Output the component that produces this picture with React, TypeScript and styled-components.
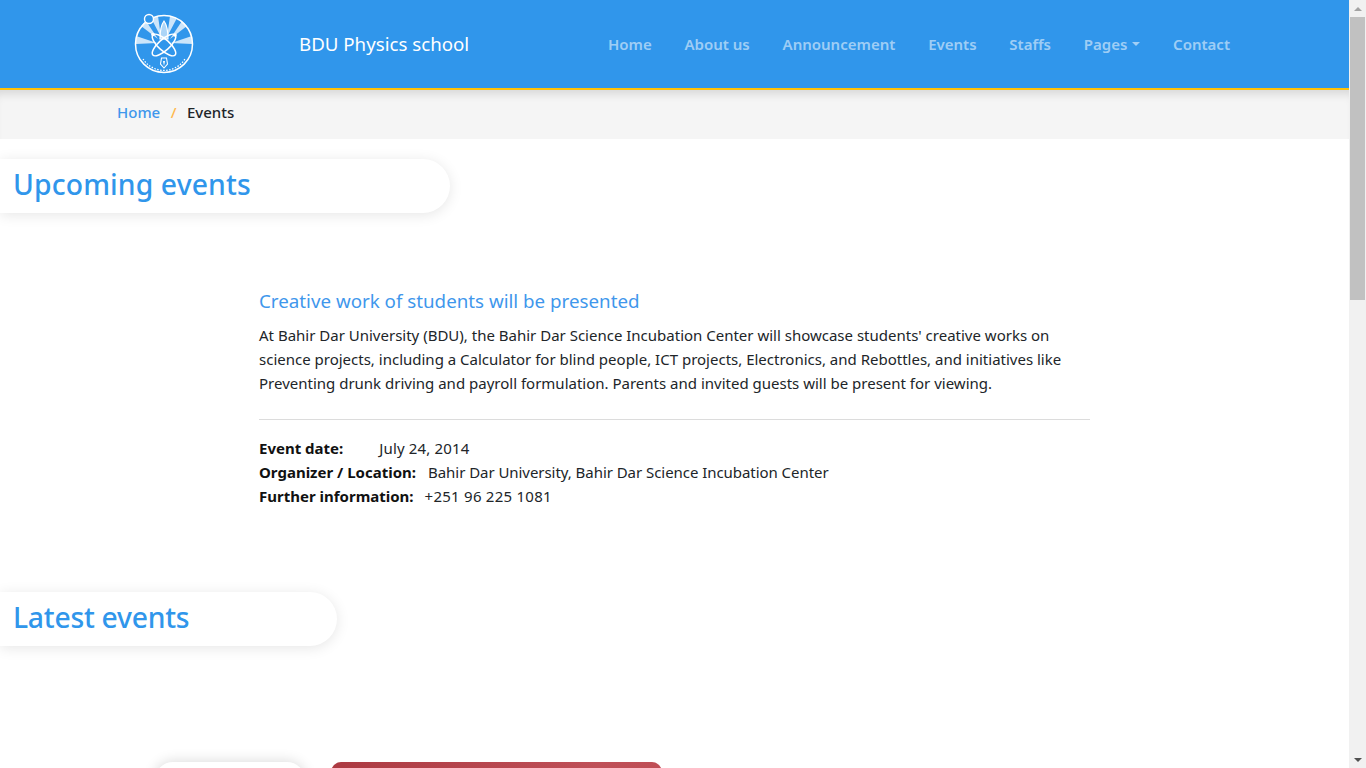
import React from 'react';
import styled, { createGlobalStyle } from 'styled-components';

const GlobalStyle = createGlobalStyle`
  body {
    margin: 0;
    background: #fff;
    color: #212529;
    font-family: "Noto Sans", "Open Sans", sans-serif;
    font-size: 15px;
    line-height: 24px;
  }
`;

const Page = styled.div`
  margin-right: 17px;
`;

const Scrollbar = styled.div`
  position: fixed;
  top: 0;
  right: 0;
  bottom: 0;
  display: flex;
  flex-direction: column;
  align-items: center;
  width: 17px;
  background: #f1f1f1;
`;

const ArrowBox = styled.div<{ $bottom?: boolean }>`
  display: flex;
  align-items: center;
  justify-content: center;
  height: 17px;
  margin-top: ${(p) => (p.$bottom ? 'auto' : '0')};
`;

const ArrowUp = styled.span`
  border-bottom: 4px solid #a3a3a3;
  border-left: 4px solid transparent;
  border-right: 4px solid transparent;
`;

const ArrowDown = styled.span`
  border-top: 4px solid #505050;
  border-left: 4px solid transparent;
  border-right: 4px solid transparent;
`;

const Thumb = styled.div`
  width: 15px;
  height: 283px;
  background: #c1c1c1;
`;

const Header = styled.header`
  display: flex;
  align-items: center;
  height: 88px;
  padding: 0 119px 0 133px;
  background: #3096eb;
  border-bottom: 2px solid #ffc107;
`;

const Brand = styled.a`
  margin-left: 104px;
  color: #fff;
  font-size: 18.7px;
  white-space: nowrap;
`;

const Nav = styled.nav`
  display: flex;
  gap: 32.8px;
  margin-left: auto;
`;

const NavLink = styled.a`
  display: flex;
  align-items: center;
  color: rgba(255, 255, 255, 0.55);
  font-size: 15px;
  font-weight: 600;
  white-space: nowrap;
`;

const Caret = styled.span`
  margin-left: 5px;
  border-top: 4px solid currentColor;
  border-left: 4px solid transparent;
  border-right: 4px solid transparent;
`;

const Breadcrumb = styled.div`
  display: flex;
  align-items: center;
  box-sizing: border-box;
  height: 49px;
  padding: 0 0 6px 117px;
  background: #f5f5f5;
  box-shadow: inset 0 10px 10px -6px rgba(0, 0, 0, 0.12);
  font-weight: 500;
`;

const Crumb = styled.a`
  color: #3f97ec;
`;

const CrumbSep = styled.span`
  margin: 0 10.5px;
  color: #ffb84d;
`;

const CrumbCurrent = styled.span`
  color: #212529;
`;

const SectionTitle = styled.h2<{ $width: number; $spacing: number }>`
  width: ${(p) => p.$width}px;
  box-sizing: border-box;
  height: 54px;
  margin: 20px 0 0;
  padding-left: 13px;
  background: #fff;
  border-radius: 0 27px 27px 0;
  box-shadow: 0 2px 14px rgba(0, 0, 0, 0.1);
  color: #3096eb;
  font-size: 28.3px;
  font-weight: 500;
  letter-spacing: ${(p) => p.$spacing}px;
  line-height: 50px;
`;

const EventBlock = styled.article`
  width: 831px;
  margin: 74px 0 0 259px;
`;

const EventTitle = styled.h3`
  margin: 0 0 8px;
  color: #3f97ec;
  font-size: 18.75px;
  font-weight: 400;
  line-height: 28px;
`;

const EventText = styled.p`
  margin: 0;
`;

const Rule = styled.hr`
  margin: 24px 0 16px;
  border: 0;
  border-top: 1px solid #dcdcdc;
`;

const DetailRow = styled.div`
  display: flex;
`;

const DetailLabel = styled.strong<{ $gap: number }>`
  margin-right: ${(p) => p.$gap}px;
  color: #111;
  font-weight: 700;
`;

const DetailValue = styled.span<{ $spacing?: number }>`
  letter-spacing: ${(p) => p.$spacing ?? 0}px;
`;

const LatestSection = styled.section`
  margin-top: 84px;
`;

const CardRow = styled.div`
  display: flex;
  align-items: flex-start;
  gap: 26px;
  margin: 116px 0 0 155px;
  padding-bottom: 90px;
`;

const ProfileCard = styled.div`
  width: 150px;
  height: 320px;
  background: #fff;
  border-radius: 18px;
  box-shadow: 0 0 14px rgba(0, 0, 0, 0.16);
`;

const PhotoCard = styled.div`
  width: 331px;
  height: 1140px;
  border-radius: 10px;
  background: linear-gradient(100deg, #ac3a42, #bf5058 50%, #c0474d);
`;

const Logo = () => (
  <svg width="62" height="62" viewBox="0 0 62 62" fill="none" stroke="#fff">
    <g fill="#fff" fillOpacity="0.75" stroke="none">
      <path d="M28 24 L18 5 L25 3 Z" />
      <path d="M34 24 L44 5 L37 3 Z" />
      <path d="M25 26 L8 13 L13 8 Z" />
      <path d="M37 26 L54 13 L49 8 Z" />
      <path d="M24 30 L3 23 L3 31 Z" />
      <path d="M38 30 L59 23 L59 31 Z" />
    </g>
    <circle cx="31" cy="31" r="28.5" strokeWidth="1.5" />
    <circle cx="16" cy="6" r="4.5" strokeWidth="1.4" fill="#3096eb" />
    <path d="M31 8 C34 12 35 17 35 26 L27 26 C27 17 28 12 31 8 Z" fill="#fff" fillOpacity="0.6" strokeWidth="1.2" />
    <g strokeWidth="1.5">
      <ellipse cx="31" cy="32" rx="15" ry="5.5" transform="rotate(42 31 32)" />
      <ellipse cx="31" cy="32" rx="15" ry="5.5" transform="rotate(-42 31 32)" />
    </g>
    <circle cx="20" cy="21.5" r="1.8" fill="#fff" stroke="none" />
    <circle cx="42" cy="22" r="1.8" fill="#fff" stroke="none" />
    <path d="M28.5 45 L33.5 45 L34.5 51 L31 55 L27.5 51 Z" strokeWidth="1.1" />
    <path d="M30 48 L32 48 L31 53 Z" fill="#fff" stroke="none" />
    <path d="M10 46 A 25 25 0 0 0 52 46" strokeWidth="1.3" strokeDasharray="1.5 1.5" />
  </svg>
);

export default function App() {
  return (
    <>
      <GlobalStyle />
      <Page>
        <Header>
          <Logo />
          <Brand>BDU Physics school</Brand>
          <Nav>
            <NavLink>Home</NavLink>
            <NavLink>About us</NavLink>
            <NavLink>Announcement</NavLink>
            <NavLink>Events</NavLink>
            <NavLink>Staffs</NavLink>
            <NavLink>
              Pages
              <Caret />
            </NavLink>
            <NavLink>Contact</NavLink>
          </Nav>
        </Header>
        <Breadcrumb>
          <Crumb>Home</Crumb>
          <CrumbSep>/</CrumbSep>
          <CrumbCurrent>Events</CrumbCurrent>
        </Breadcrumb>
        <SectionTitle $width={450} $spacing={0.13}>
          Upcoming events
        </SectionTitle>
        <EventBlock>
          <EventTitle>Creative work of students will be presented</EventTitle>
          <EventText>
            At Bahir Dar University (BDU), the Bahir Dar Science Incubation Center will showcase students' creative works on
            science projects, including a Calculator for blind people, ICT projects, Electronics, and Rebottles, and initiatives like
            Preventing drunk driving and payroll formulation. Parents and invited guests will be present for viewing.
          </EventText>
          <Rule />
          <DetailRow>
            <DetailLabel $gap={36}>Event date:</DetailLabel>
            <DetailValue $spacing={0.15}>July 24, 2014</DetailValue>
          </DetailRow>
          <DetailRow>
            <DetailLabel $gap={12}>Organizer / Location:</DetailLabel>
            <DetailValue $spacing={-0.05}>Bahir Dar University, Bahir Dar Science Incubation Center</DetailValue>
          </DetailRow>
          <DetailRow>
            <DetailLabel $gap={11}>Further information:</DetailLabel>
            <DetailValue $spacing={0.25}>+251 96 225 1081</DetailValue>
          </DetailRow>
        </EventBlock>
        <LatestSection>
          <SectionTitle $width={337} $spacing={-0.25}>
            Latest events
          </SectionTitle>
          <CardRow>
            <ProfileCard />
            <PhotoCard />
          </CardRow>
        </LatestSection>
      </Page>
      <Scrollbar>
        <ArrowBox>
          <ArrowUp />
        </ArrowBox>
        <Thumb />
        <ArrowBox $bottom>
          <ArrowDown />
        </ArrowBox>
      </Scrollbar>
    </>
  );
}
